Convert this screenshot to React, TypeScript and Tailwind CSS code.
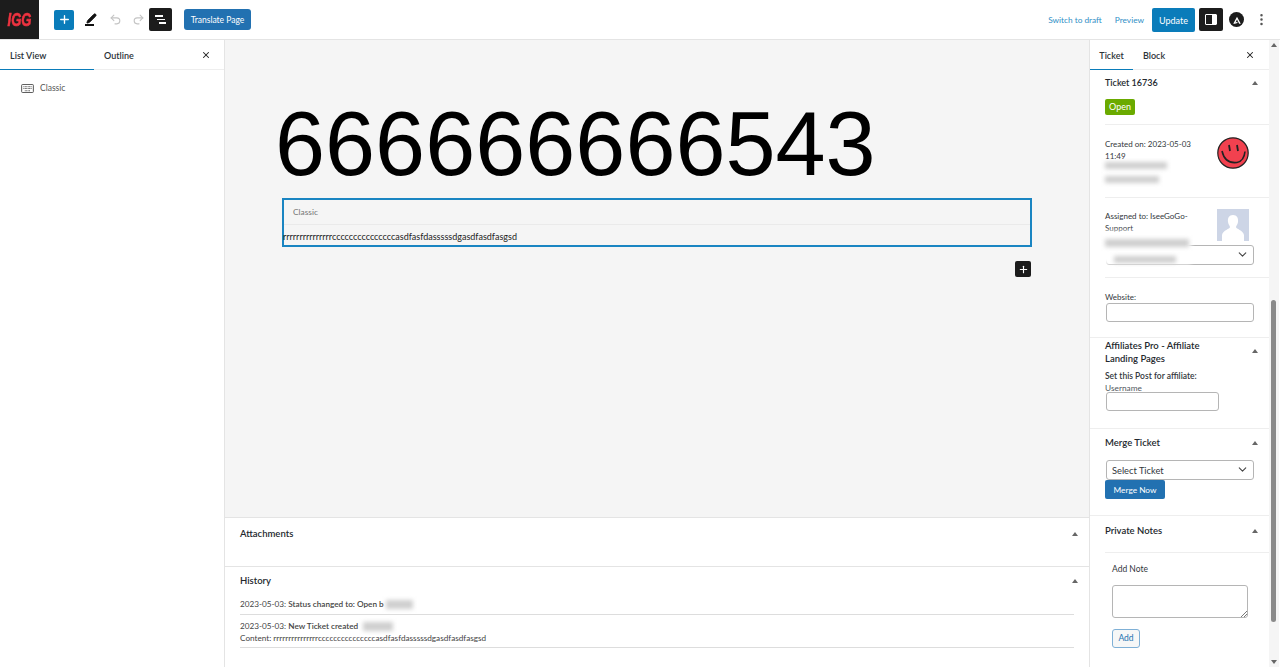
import React from "react";
import { ChevronDown, MoreVertical, Pen, Plus, Redo2, Undo2, X } from "lucide-react";

function Caret() {
  return <span className="w-0 h-0 border-x-[3px] border-x-transparent border-b-[4px] border-b-[#666]" />;
}

function Smudge({ className }: { className: string }) {
  return <div className={`blur-[2px] ${className}`} />;
}

function SelectBox({ label }: { label?: string }) {
  return (
    <div className="h-[20px] w-[148px] border border-[#b5b5b5] rounded-[3px] bg-white flex items-center justify-between pl-[5px] pr-[4px] text-[9.3px] text-[#32373c]">
      <span className="pt-[2px]">{label}</span>
      <ChevronDown className="w-[13px] h-[13px] text-[#444]" strokeWidth={2} />
    </div>
  );
}

function Topbar() {
  return (
    <header className="h-[40px] shrink-0 bg-white border-b border-[#e4e4e4] flex items-center">
      <div className="w-[39px] h-[39px] bg-[#1c1c1c] flex items-center justify-center">
        <span className="font-['Liberation_Sans',sans-serif] italic font-bold text-[13px] text-[#ee3340] [-webkit-text-stroke:0.5px_#ee3340] scale-y-[1.4]">IGG</span>
      </div>
      <button className="ml-[15px] w-[20px] h-[20px] bg-[#0a7cba] rounded-[2px] flex items-center justify-center">
        <Plus className="w-[13px] h-[13px] text-white" strokeWidth={2.5} />
      </button>
      <span className="ml-[7px] w-[20px] flex flex-col items-center">
        <Pen className="w-[11px] h-[11px] text-[#111] fill-[#111]" />
        <span className="w-[9px] h-[1.5px] bg-[#111] -ml-[4px]" />
      </span>
      <Undo2 className="ml-[8px] w-[13px] h-[13px] text-[#c4c4c4]" />
      <Redo2 className="ml-[10px] w-[13px] h-[13px] text-[#c4c4c4]" />
      <button className="ml-[4px] w-[23px] h-[23px] bg-[#1c1c1c] rounded-[2px] flex flex-col items-center justify-center gap-[2px]">
        <span className="w-[8px] h-[1.5px] bg-white -ml-[4px]" />
        <span className="w-[8px] h-[1.5px] bg-white" />
        <span className="w-[7px] h-[1.5px] bg-white ml-[3px]" />
      </button>
      <button className="ml-[12px] w-[67px] h-[21px] pt-[2px] bg-[#2271b1] rounded-[3px] text-white text-[8.5px]">Translate Page</button>
      <div className="ml-auto flex items-center">
        <span className="pt-[2px] text-[8.3px] text-[#2f8fc6]">Switch to draft</span>
        <span className="ml-[13px] pt-[2px] text-[8.3px] text-[#2f8fc6]">Preview</span>
        <button className="ml-[8px] w-[43px] h-[24px] pt-[2px] bg-[#0a7cba] rounded-[2px] text-white text-[9px]">Update</button>
        <button className="ml-[4px] w-[24px] h-[23px] bg-[#1c1c1c] rounded-[2px] flex items-center justify-center">
          <span className="w-[12px] h-[11px] border-[1.5px] border-white rounded-[1px] flex justify-end">
            <span className="w-[4px] bg-white" />
          </span>
        </button>
        <span className="ml-[6px] w-[15px] h-[15px] rounded-full bg-[#1c1c1c] flex items-center justify-center">
          <svg viewBox="0 0 12 12" className="w-[10px] h-[10px]">
            <path d="M1.5 10.5 6 2l4.5 8.5H8.6L6 5.4 4.2 9 6.5 8v1.5l-3 1z" fill="#fff" />
          </svg>
        </span>
        <MoreVertical className="ml-[10px] mr-[11px] w-[15px] h-[15px] text-[#555]" />
      </div>
    </header>
  );
}

function ListPanel() {
  return (
    <aside className="w-[225px] shrink-0 bg-white border-r border-[#e4e4e4]">
      <div className="h-[30px] flex border-b border-[#eee] relative text-[9px] text-[#2c3338]">
        <div className="w-[94px] h-[30px] pl-[10px] pt-[2px] flex items-center font-semibold border-b-[1.5px] border-[#0a7cba]">List View</div>
        <div className="pl-[10px] pt-[2px] flex items-center font-semibold">Outline</div>
        <X className="ml-auto mr-[13px] mt-[10px] w-[10px] h-[10px] text-[#222]" strokeWidth={2.5} />
      </div>
      <div className="mt-[12px] ml-[21px] flex items-center gap-[6px]">
        <svg viewBox="0 0 14 10" className="w-[13px] h-[9px]" fill="none" stroke="#444">
          <rect x="0.5" y="0.5" width="13" height="9" rx="1" />
          <path d="M2.5 3h9M2.5 5h9M4 7.5h6" strokeDasharray="1 .6" />
        </svg>
        <span className="text-[8.5px] text-[#555]">Classic</span>
      </div>
    </aside>
  );
}

function Editor() {
  return (
    <main className="flex-1 bg-[#f5f5f5] relative flex flex-col">
      <h1 className="ml-[50px] mt-[52px] h-[106px] font-['Liberation_Sans',sans-serif] text-[90px] leading-[105px] text-black whitespace-nowrap">666666666543</h1>
      <section className="ml-[57px] w-[750px] h-[49px] border-2 border-[#1a85c2]">
        <div className="h-[25px] border-b border-[#eaeaea] pl-[9px] flex items-center text-[8.4px] text-[#777]">Classic</div>
        <p className="pt-[5px] -ml-[1px] text-[9px] leading-[14px] text-[#222]">rrrrrrrrrrrrrrrcccccccccccccccasdfasfdasssssdgasdfasdfasgsd</p>
      </section>
      <button className="ml-[790px] mt-[14px] w-[16px] h-[16px] bg-[#1c1c1c] rounded-[2px] flex items-center justify-center">
        <Plus className="w-[11px] h-[11px] text-white" strokeWidth={2.5} />
      </button>
    </main>
  );
}

function BottomPanels() {
  return (
    <div className="h-[150px] shrink-0 bg-white">
      <div className="h-[50px] border-y border-[#e4e4e4] pl-[15px] pr-[11px] pt-[9px] flex justify-between">
        <h3 className="text-[9.5px] font-semibold text-[#23282d]">Attachments</h3>
        <span className="mt-[5px] flex"><Caret /></span>
      </div>
      <div className="pl-[15px] pr-[15px] pt-[7px] relative">
        <div className="flex justify-between">
          <h3 className="text-[9.5px] font-semibold text-[#23282d]">History</h3>
          <span className="mt-[5px] -mr-[4px] flex"><Caret /></span>
        </div>
        <div className="mt-[10px] pb-[3px] border-b border-[#ddd] text-[8.2px] leading-[13px] text-[#444] flex items-center">
          2023-05-03:&nbsp;<b className="font-semibold">Status changed to: Open b</b>
          <Smudge className="ml-[2px] w-[27px] h-[9px] bg-[#cfcfcf]" />
        </div>
        <div className="mt-[5px] pb-[3px] border-b border-[#ddd] text-[8.2px] leading-[12px] text-[#444]">
          <div className="flex items-center">
            2023-05-03:&nbsp;<b className="font-semibold">New Ticket created</b>
            <Smudge className="ml-[5px] w-[30px] h-[9px] bg-[#cfcfcf]" />
          </div>
          <div>Content: rrrrrrrrrrrrrrrcccccccccccccccasdfasfdasssssdgasdfasdfasgsd</div>
        </div>
      </div>
    </div>
  );
}

function Sidebar() {
  return (
    <aside className="w-[191px] shrink-0 bg-white border-l border-[#e4e4e4] flex">
      <div className="w-[179px] text-[8px] text-[#32373c]">
        <div className="h-[30px] flex border-b border-[#eee] text-[9px] text-[#2c3338] font-semibold">
          <div className="w-[43px] pt-[2px] flex items-center justify-center h-[30px] border-b-[1.5px] border-[#0a7cba]">Ticket</div>
          <div className="ml-[10px] pt-[2px] flex items-center">Block</div>
          <X className="ml-auto mr-[14px] mt-[10px] w-[10px] h-[10px] text-[#222]" strokeWidth={2.5} />
        </div>

        <div className="pl-[15px]">
          <div className="mt-[6px] pr-[11px] flex items-center justify-between">
            <h3 className="text-[9px] font-semibold text-[#23282d]">Ticket 16736</h3>
            <Caret />
          </div>
          <span className="mt-[9px] w-[30px] h-[16px] pt-[1px] bg-[#6aaa00] rounded-[2px] text-white text-[9px] flex items-center justify-center">Open</span>

          <div className="mt-[9px] pr-[20px] border-t border-[#eee] h-[73px] flex justify-between pt-[12px]">
            <div className="leading-[12px] pt-[1px]">
              <div>Created on: 2023-05-03<br />11:49</div>
              <Smudge className="w-[62px] h-[7px] bg-[#cfcfcf]" />
              <Smudge className="mt-[7px] w-[54px] h-[7px] bg-[#cfcfcf]" />
            </div>
            <svg viewBox="0 0 32 32" className="w-[32px] h-[32px] shrink-0">
              <circle cx="16" cy="16" r="15.2" fill="#f2414f" stroke="#222" strokeWidth="1.2" />
              <path d="M5 14q3 13 15 11.5q7-1.5 8-11" fill="none" stroke="#222" strokeWidth="1.6" />
              <path d="M12 8l1 6M20 8l1 6" stroke="#222" strokeWidth="1.8" />
            </svg>
          </div>

          <div className="border-t border-[#eee] h-[80px] pt-[11px] relative">
            <div className="flex justify-between pr-[20px]">
              <div className="leading-[12px] pt-[1px]">Assigned to: IseeGoGo-<br />Support</div>
              <svg viewBox="0 0 32 32" className="w-[32px] h-[32px] shrink-0">
                <rect width="32" height="32" fill="#cdd5e6" />
                <path d="M16 6c4 0 5.500 3 5 7-.3 2-1.500 3.500-2 5 0 2 7 3 8 8v6H5v-6c1-5 8-6 8-8-.5-1.500-1.700-3-2-5-.5-4 1-7 5-7z" fill="#fff" />
              </svg>
            </div>
            <div className="mt-[4px] ml-[1px]"><SelectBox /></div>
            <Smudge className="absolute -left-[6px] top-[33px] w-[92px] h-[33px] bg-white z-10" />
            <Smudge className="absolute left-[0px] top-[41px] w-[84px] h-[8px] bg-[#cfcfcf] z-10" />
            <Smudge className="absolute left-[9px] top-[58px] w-[62px] h-[7px] bg-[#cfcfcf] z-10" />
          </div>

          <div className="border-t border-[#eee] h-[60px] pt-[13px]">
            <div className="leading-[12px]">Website:</div>
            <div className="ml-[1px] w-[148px] h-[19px] border border-[#b5b5b5] rounded-[3px]" />
          </div>
        </div>

        <div className="border-t border-[#eee] pl-[15px] pr-[11px] h-[91px]">
          <div className="flex justify-between items-center">
            <h3 className="w-[120px] text-[9.5px] leading-[13px] pt-[1px] font-semibold text-[#23282d]">Affiliates Pro - Affiliate Landing Pages</h3>
            <Caret />
          </div>
          <div className="mt-[5px] text-[8.5px] leading-[12px] font-semibold">Set this Post for affiliate:</div>
          <div className="text-[8.3px] leading-[12px] text-[#50575e]">Username</div>
          <div className="-mt-[2px] ml-[1px] w-[113px] h-[19px] border border-[#b5b5b5] rounded-[3px]" />
        </div>

        <div className="border-t border-[#eee] pl-[15px] pr-[11px] h-[87px] pt-[7px]">
          <div className="flex justify-between items-center">
            <h3 className="text-[9.5px] font-semibold text-[#23282d]">Merge Ticket</h3>
            <Caret />
          </div>
          <div className="mt-[10px] ml-[1px]"><SelectBox label="Select Ticket" /></div>
          <button className="w-[60px] h-[19px] pt-[1px] bg-[#2271b1] rounded-[2px] text-white text-[8.3px]">Merge Now</button>
        </div>

        <div className="border-t border-[#eee] pl-[15px] pt-[8px]">
          <div className="flex justify-between items-center pr-[11px] pb-[14px] border-b border-[#eee]">
            <h3 className="text-[9.5px] font-semibold text-[#23282d]">Private Notes</h3>
            <Caret />
          </div>
          <div className="pl-[7px] mt-[9px] text-[8.5px] leading-[14px]">Add Note</div>
          <div className="ml-[7px] mt-[9px] w-[136px] h-[33px] border border-[#b5b5b5] rounded-[3px] flex items-end justify-end">
            <svg viewBox="0 0 6 6" className="w-[6px] h-[6px]" fill="none" stroke="#555" strokeWidth="0.8">
              <path d="M0 6l6-6M3 6l3-3" />
            </svg>
          </div>
          <button className="ml-[7px] mt-[11px] w-[28px] h-[19px] border border-[#7fb0d6] rounded-[3px] text-[#2271b1] text-[8.5px] bg-[#f6f7f7]">Add</button>
        </div>
      </div>

      <div className="w-[10px] bg-[#f5f5f5] flex flex-col items-center py-[3px] justify-between relative">
        <Caret />
        <span className="w-0 h-0 border-x-[3px] border-x-transparent border-t-[4px] border-t-[#666]" />
        <span className="absolute top-[260px] left-[2px] w-[5px] h-[322px] rounded-[3px] bg-[#8a8a8a]" />
      </div>
    </aside>
  );
}

export default function App() {
  return (
    <div className="h-[667px] w-[1280px] overflow-hidden flex flex-col bg-white font-['Lato',sans-serif]">
      <Topbar />
      <div className="flex flex-1 min-h-0">
        <ListPanel />
        <div className="flex-1 flex flex-col min-w-0">
          <Editor />
          <BottomPanels />
        </div>
        <Sidebar />
      </div>
    </div>
  );
}
